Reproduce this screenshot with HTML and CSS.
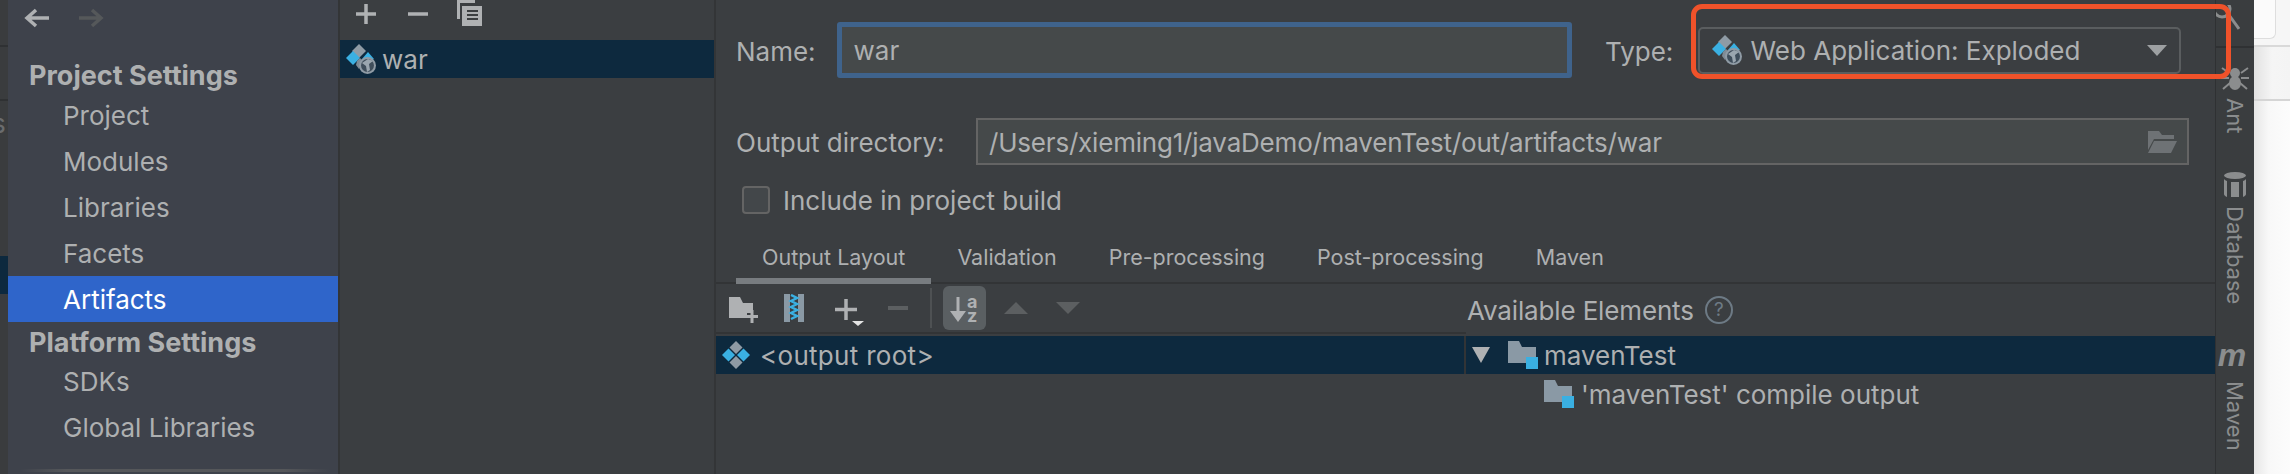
FILE: index.html
```html
<!DOCTYPE html>
<html lang="en">
<head>
<meta charset="utf-8">
<title>Project Structure</title>
<link rel="stylesheet" href="styles.css">
</head>
<body>
<svg class="defs" width="0" height="0" aria-hidden="true">
  <symbol id="web" viewBox="0 0 30 30">
    <path d="M13 0l7 7-7 7-7-7z" fill="#8f9ba5"/>
    <path d="M7 7l7 7-7 7-7-7z" fill="#3ab0e2"/>
    <path d="M22 8l6 7h-12z" fill="#3ab0e2"/>
    <path d="M11 17l3-3 3 3-4 8-3-4z" fill="#7f8b95"/>
    <circle cx="21.500" cy="21.500" r="8.500" fill="#8f9ba5"/>
    <circle cx="21.500" cy="21.500" r="6.500" fill="#3f4e5b"/>
    <path d="M16 19l6-4 5 2-4 3 1 6-3 2-1-6z" fill="#9aa6af"/>
  </symbol>
  <symbol id="root" viewBox="0 0 28 28">
    <path d="M14 0l6.500 6.500-6.500 6.500-6.500-6.500z" fill="#8f9ba5"/>
    <path d="M14 15l6.500 6.500-6.500 6.500-6.500-6.500z" fill="#8f9ba5"/>
    <path d="M6.500 7.500l6.500 6.500-6.500 6.500-6.500-6.500z" fill="#3ab0e2"/>
    <path d="M21.500 7.500l6.500 6.500-6.500 6.500-6.500-6.500z" fill="#3ab0e2"/>
  </symbol>
  <symbol id="module" viewBox="0 0 30 28">
    <path d="M0 0h11l3 6h14v16h-28z" fill="#8a99a5"/>
    <rect x="18" y="16" width="12" height="12" fill="#3ab0e2"/>
  </symbol>
</svg>

<div class="app">
  <div class="edge">
    <div class="edge-top"></div>
    <div class="edge-mid"><span class="edge-letter">s</span></div>
    <div class="edge-band"></div>
  </div>

  <nav class="sidebar">
    <div class="history">
      <svg class="hist-icon" viewBox="0 0 26 20"><path d="M12 2l-9 8 9 8M3 10h22" fill="none" stroke="#afb1b3" stroke-width="3.500"/></svg>
      <svg class="hist-icon" viewBox="0 0 26 20"><path d="M14 2l9 8-9 8M23 10h-22" fill="none" stroke="#55585a" stroke-width="3.500"/></svg>
    </div>
    <div class="group">Project Settings</div>
    <div class="item">Project</div>
    <div class="item">Modules</div>
    <div class="item">Libraries</div>
    <div class="item">Facets</div>
    <div class="item active">Artifacts</div>
    <div class="group group-tight">Platform Settings</div>
    <div class="item">SDKs</div>
    <div class="item">Global Libraries</div>
    <div class="side-scroll"></div>
  </nav>

  <section class="list">
    <div class="list-tools">
      <svg class="lt-plus" viewBox="0 0 20 20"><path d="M10 0v20M0 10h20" stroke="#afb1b3" stroke-width="3.500"/></svg>
      <svg class="lt-minus" viewBox="0 0 20 20"><path d="M0 10h20" stroke="#afb1b3" stroke-width="3.500"/></svg>
      <svg class="lt-copy" viewBox="0 0 25 26">
        <path d="M0 0h18v3h-15v16h-3z" fill="#afb1b3"/>
        <path d="M5 6h20v20h-20z" fill="#afb1b3"/>
        <path d="M10 11h11M10 15h11M10 19h11" stroke="#3c3f41" stroke-width="2"/>
      </svg>
    </div>
    <div class="list-row">
      <svg class="ic-web"><use href="#web"/></svg>
      <span>war</span>
    </div>
  </section>

  <main class="main">
    <div class="form-row row-name">
      <label class="lbl lbl-name">Name:</label>
      <div class="name-input">war</div>
      <label class="lbl lbl-type">Type:</label>
      <div class="combo">
        <svg class="ic-web"><use href="#web"/></svg>
        <span class="combo-text">Web Application: Exploded</span>
        <svg class="combo-arrow" viewBox="0 0 20 11"><path d="M0 0h20l-10 11z" fill="#9da0a2"/></svg>
      </div>
    </div>
    <div class="form-row row-dir">
      <label class="lbl lbl-dir">Output directory:</label>
      <div class="dir-field">
        <span class="dir-text">/Users/xieming1/javaDemo/mavenTest/out/artifacts/war</span>
        <svg class="dir-icon" viewBox="0 0 30 22"><path d="M1 0h11l3 4h12v4h-20l-6 11z" fill="#6e7275"/><path d="M7 10h23l-6 12h-23z" fill="#6e7275"/></svg>
      </div>
    </div>
    <div class="form-row row-check">
      <span class="check"></span>
      <span class="include">Include in project build</span>
    </div>

    <div class="tabs">
      <span class="tab on">Output Layout</span>
      <span class="tab">Validation</span>
      <span class="tab">Pre-processing</span>
      <span class="tab">Post-processing</span>
      <span class="tab">Maven</span>
    </div>

    <div class="split">
      <div class="layout">
        <div class="tools">
          <svg class="t-folder" viewBox="0 0 29 26"><path d="M0 0h11l3 6h10v10h-6v5h-18z" fill="#afb1b3"/><path d="M23 13v13M17 19.500h12" stroke="#afb1b3" stroke-width="3"/></svg>
          <svg class="t-zip" viewBox="0 0 20 28"><rect width="20" height="28" fill="#8a99a5"/><rect x="6" width="8" height="28" fill="#3b3e41"/><path d="M7 1l6 3-6 3 6 3-6 3 6 3-6 3 6 3-6 3" fill="none" stroke="#3ab0e2" stroke-width="2.500"/></svg>
          <svg class="t-plus" viewBox="0 0 29 27"><path d="M11 0v21M0 10.500h22" stroke="#afb1b3" stroke-width="3.500"/><path d="M17 22h12l-6 5z" fill="#e4e4e4"/></svg>
          <svg class="t-minus" viewBox="0 0 20 4"><rect width="20" height="4" fill="#5c5f61"/></svg>
          <span class="t-sep"></span>
          <span class="t-sort">
            <svg viewBox="0 -5 30 37">
              <path d="M8 3v20" stroke="#afb1b3" stroke-width="3"/><path d="M0 17h16l-8 11z" fill="#afb1b3"/>
              <text class="sort-a" x="17" y="14">a</text><text class="sort-a" x="17" y="28">z</text>
            </svg>
          </span>
          <svg class="t-tri t-up" viewBox="0 0 24 12"><path d="M0 12h24l-12-12z" fill="#5c5f61"/></svg>
          <svg class="t-tri t-down" viewBox="0 0 24 12"><path d="M0 0h24l-12 12z" fill="#5c5f61"/></svg>
        </div>
        <div class="tree-row root-row">
          <svg class="ic-root"><use href="#root"/></svg>
          <span>&lt;output root&gt;</span>
        </div>
      </div>
      <div class="available">
        <div class="avail-head">
          <span class="avail-title">Available Elements</span>
          <span class="help">?</span>
        </div>
        <div class="tree-row avail-row">
          <svg class="twist" viewBox="0 0 18 16"><path d="M0 0h18l-9 16z" fill="#afb1b3"/></svg>
          <svg class="ic-mod"><use href="#module"/></svg>
          <span>mavenTest</span>
        </div>
        <div class="tree-row child-row">
          <svg class="ic-mod"><use href="#module"/></svg>
          <span>'mavenTest' compile output</span>
        </div>
      </div>
    </div>
  </main>

  <aside class="rail">
    <div class="rail-top">
      <svg class="rail-mag" viewBox="0 0 24 26"><circle cx="6" cy="4" r="8" fill="none" stroke="#8b8d8e" stroke-width="3"/><path d="M13 10l10 14" stroke="#8b8d8e" stroke-width="3"/></svg>
    </div>
    <div class="rail-tool tool-ant">
      <svg class="rail-bug" viewBox="0 0 28 24"><path d="M1 2l7 5M27 2l-7 5M0 12h8M28 12h-8M2 23l7-6M26 23l-7-6" fill="none" stroke="#8b8d8e" stroke-width="2"/><ellipse cx="14" cy="7" rx="5" ry="5" fill="#8b8d8e"/><ellipse cx="14" cy="17" rx="6" ry="7" fill="#8b8d8e"/></svg>
      <span class="rail-text">Ant</span>
    </div>
    <div class="rail-tool tool-db">
      <svg class="rail-db" viewBox="0 0 24 25"><ellipse cx="12" cy="3.500" rx="11" ry="3.500" fill="#8b8d8e"/><path d="M1 7v15c0 2 3 3 3 3v-16c-2-.5-3-2-3-2zM8 10v15h8v-15zM20 9v16s3-1 3-3v-15s-1 1.500-3 2z" fill="#8b8d8e"/></svg>
      <span class="rail-text">Database</span>
    </div>
    <div class="rail-tool tool-mvn">
      <span class="rail-m">m</span>
      <span class="rail-text">Maven</span>
    </div>
  </aside>

  <div class="outside">
    <div class="out-top"><div class="out-box"></div></div>
    <div class="out-mid"></div>
    <div class="out-rest"></div>
  </div>

  <div class="callout"></div>
</div>
</body>
</html>
```

FILE: styles.css
```css
* { box-sizing: border-box; }
html, body { margin: 0; padding: 0; background: #fff; }
body { width: 2290px; height: 474px; overflow: hidden; }
.defs { position: absolute; }

.app {
  position: relative;
  display: flex;
  width: 2290px;
  height: 474px;
  font-family: Inter, "Liberation Sans", sans-serif;
  font-size: 26px;
  color: #aeb0b1;
  background: #3b3e41;
}

/* left edge of the window behind */
.edge { width: 8px; flex: none; background: #3a3c3e; display: flex; flex-direction: column; overflow: hidden; }
.edge-top { height: 47px; flex: none; border-bottom: 2px solid #2f3133; }
.edge-mid { height: 54px; flex: none; border-bottom: 2px solid #2f3133; }
.edge-letter { display: block; margin: 62px 0 0 -8px; line-height: 30px; color: #6a6c6e; }
.edge-band { height: 38px; flex: none; margin-top: 155px; background: #0d293e; }

/* sidebar */
.sidebar {
  width: 332px;
  flex: none;
  background: #3e424b;
  border-right: 2px solid #333537;
  display: flex;
  flex-direction: column;
}
.history { display: flex; gap: 28px; height: 52px; flex: none; padding: 8px 0 0 16px; }
.hist-icon { width: 26px; height: 20px; }
.group { height: 40px; flex: none; line-height: 47px; padding-left: 21px; font-size: 27px; font-weight: 700; }
.group-tight { height: 36px; line-height: 41px; }
.item { height: 46px; line-height: 48px; padding-left: 55px; flex: none; }
.item.active { background: #2f65ca; color: #fff; }
.side-scroll {
  height: 3px;
  flex: none;
  margin: 19px 8px 0 12px;
  background: linear-gradient(90deg, #3e424b, #55575a 15%, #55575a 85%, #3e424b);
}

/* artifact list */
.list { width: 376px; flex: none; border-right: 2px solid #333537; }
.list-tools { height: 40px; display: flex; align-items: flex-start; }
.lt-plus { width: 20px; height: 20px; margin: 4px 0 0 16px; }
.lt-minus { width: 20px; height: 20px; margin: 4px 0 0 32px; }
.lt-copy { width: 25px; height: 26px; margin: 0 0 0 29px; }
.list-row { height: 38px; background: #0d293e; display: flex; align-items: center; padding-left: 6px; }
.ic-web { width: 30px; height: 30px; flex: none; }
.list-row span { margin-left: 6px; }

/* main form */
.main { width: 1499px; flex: none; display: flex; flex-direction: column; }
.form-row { display: flex; align-items: center; flex: none; }
.lbl { white-space: nowrap; padding-top: 2px; }
.include { white-space: nowrap; }
.row-name { height: 56px; margin-top: 22px; padding-left: 20px; }
.lbl-name { width: 100.500px; }
.name-input {
  width: 735px;
  height: 56px;
  line-height: 48px;
  padding-left: 12px;
  background: #45494a;
  border: 5px solid #3f638c;
  border-radius: 3px;
}
.lbl-type { width: 92.500px; margin-left: 33.500px; }
.combo {
  width: 483px;
  height: 47px;
  display: flex;
  align-items: center;
  padding: 0 12px;
  border: 2px solid #5a5d5f;
  border-radius: 5px;
}
.combo-text { margin-left: 9px; flex: 1; white-space: nowrap; }
.combo-arrow { width: 20px; height: 11px; flex: none; }

.row-dir { height: 47px; margin-top: 40px; padding-left: 20px; }
.lbl-dir { width: 240px; }
.dir-field {
  width: 1213px;
  height: 47px;
  display: flex;
  align-items: center;
  justify-content: space-between;
  padding: 0 10px 0 11px;
  background: #45494a;
  border: 2px solid #646464;
}
.dir-text { letter-spacing: -0.2px; padding-top: 2px; }
.dir-icon { width: 30px; height: 22px; }

.row-check { height: 28px; margin-top: 21px; padding-left: 26px; }
.check {
  width: 28px;
  height: 28px;
  margin-right: 13px;
  background: #43474a;
  border: 2px solid #646464;
  border-radius: 4px;
}

/* tabs */
.tabs {
  height: 50px;
  margin-top: 20px;
  padding-left: 20px;
  display: flex;
  border-bottom: 2px solid #323436;
  flex: none;
  font-size: 21.500px;
}
.tab { height: 50px; padding: 0 26px; line-height: 46px; white-space: nowrap; }
.tab.on { border-bottom: 6px solid #787c80; }

.split { display: flex; flex: 1; }
.layout { width: 750px; flex: none; }
.tools {
  height: 50px;
  display: flex;
  align-items: flex-start;
  border-bottom: 2px solid #323436;
}
.t-folder { width: 29px; height: 26px; margin: 13px 0 0 13px; }
.t-zip { width: 20px; height: 28px; margin: 10px 0 0 26px; }
.t-plus { width: 29px; height: 27px; margin: 15px 0 0 31px; }
.t-minus { width: 20px; height: 4px; margin: 22px 0 0 24px; }
.t-sep { width: 2px; height: 40px; margin: 4px 0 0 22px; background: #4e5153; }
.t-sort {
  width: 43px;
  height: 44px;
  margin: 2px 0 0 11px;
  padding: 3px 6px 0 7px;
  background: #5a5f62;
  border-radius: 6px;
  display: block;
}
.t-sort svg { display: block; width: 30px; height: 37px; }
.sort-a { font-family: Inter, sans-serif; font-size: 18px; font-weight: 700; fill: #afb1b3; }
.t-tri { width: 24px; height: 12px; margin-top: 18px; }
.t-up { margin-left: 18px; }
.t-down { margin-left: 28px; }

.tree-row { height: 38px; display: flex; align-items: center; white-space: nowrap; }
.root-row { margin-top: 2px; background: #0d293e; padding-left: 6px; border-right: 2px solid #323436; }
.ic-root { width: 28px; height: 28px; flex: none; }
.root-row span { margin-left: 10px; letter-spacing: 0.3px; }

.available { flex: 1; min-width: 0; }
.avail-head { height: 52px; display: flex; align-items: center; padding-left: 1px; gap: 11px; }
.avail-title { letter-spacing: -0.15px; }
.help {
  width: 28px;
  height: 28px;
  border: 2px solid #6d7a85;
  border-radius: 50%;
  color: #6d7a85;
  font-size: 19px;
  line-height: 24px;
  text-align: center;
}
.avail-row { background: #0d293e; padding-left: 6px; }
.twist { width: 18px; height: 16px; }
.ic-mod { width: 30px; height: 28px; flex: none; }
.avail-row .ic-mod { margin-left: 18px; }
.avail-row span { margin-left: 6px; }
.child-row { margin-top: 1px; padding-left: 78px; }
.child-row span { margin-left: 7px; }

/* tool window rail */
.rail {
  width: 39px;
  flex: none;
  background: #3a3d3f;
  border-left: 1px solid #2f3133;
  display: flex;
  flex-direction: column;
  align-items: center;
  color: #8b8d8e;
  font-size: 22px;
}
.rail-top { width: 100%; height: 48px; flex: none; border-bottom: 2px solid #2f3133; }
.rail-mag { display: block; width: 24px; height: 26px; margin-top: 5px; }
.rail-tool { display: flex; flex-direction: column; align-items: center; flex: none; }
.rail-text { writing-mode: vertical-rl; line-height: 24px; white-space: nowrap; }
.tool-ant { margin-top: 18px; height: 106px; }
.rail-bug { width: 28px; height: 24px; margin-bottom: 8px; flex: none; }
.tool-db { height: 167px; }
.rail-db { width: 24px; height: 25px; margin-bottom: 9px; flex: none; }
.rail-m {
  font-family: "Liberation Sans", sans-serif;
  font-size: 32px;
  font-weight: 700;
  font-style: italic;
  line-height: 32px;
  height: 42px;
  padding-right: 6px;
}

/* desktop behind */
.outside { flex: 1; display: flex; flex-direction: column; background: #fff; }
.out-top { height: 47px; flex: none; border-bottom: 2px solid #d9d9d9; background: #f6f6f6; }
.out-box { width: 22px; height: 39px; background: #fbfbfb; border: 1px solid #dedede; border-width: 0 1px 1px 0; border-radius: 0 0 6px 0; }
.out-mid { height: 54px; border-bottom: 2px solid #d5d5d5; background: linear-gradient(90deg, #e2e2e2, #f5f5f5 50%, #f4f4f4); flex: none; }
.out-rest { flex: 1; background: linear-gradient(90deg, #e6e6e6, #f8f8f8 40%, #fcfcfc); }

/* annotation */
.callout {
  position: absolute;
  left: 1691px;
  top: 4px;
  width: 540px;
  height: 75px;
  border: 5px solid #f0522a;
  border-radius: 11px;
}
```
